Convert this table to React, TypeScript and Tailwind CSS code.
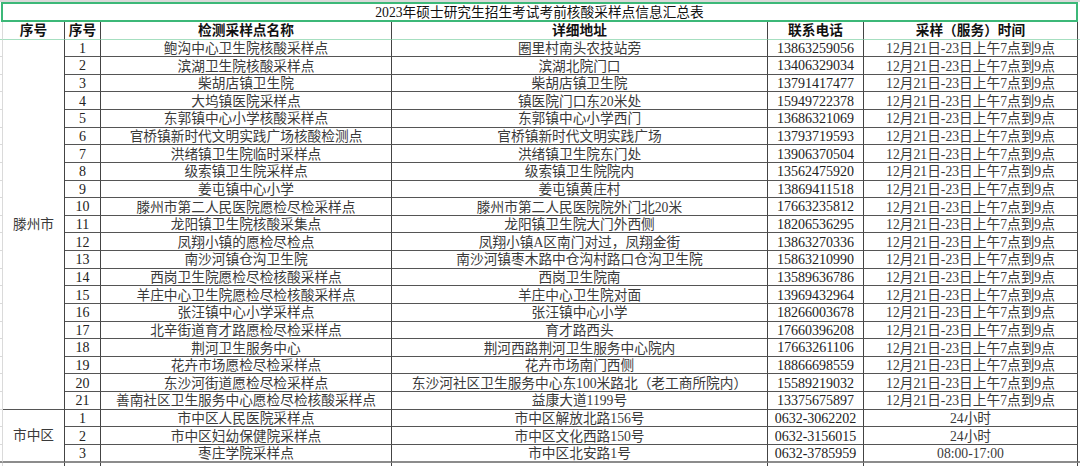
const T = '12月21日-23日上午7点到9点'

const tengzhou: [string, string, string][] = [
  ['鲍沟中心卫生院核酸采样点', '圈里村南头农技站旁', '13863259056'],
  ['滨湖卫生院核酸采样点', '滨湖北院门口', '13406329034'],
  ['柴胡店镇卫生院', '柴胡店镇卫生院', '13791417477'],
  ['大坞镇医院采样点', '镇医院门口东20米处', '15949722378'],
  ['东郭镇中心小学核酸采样点', '东郭镇中心小学西门', '13686321069'],
  ['官桥镇新时代文明实践广场核酸检测点', '官桥镇新时代文明实践广场', '13793719593'],
  ['洪绪镇卫生院临时采样点', '洪绪镇卫生院东门处', '13906370504'],
  ['级索镇卫生院采样点', '级索镇卫生院院内', '13562475920'],
  ['姜屯镇中心小学', '姜屯镇黄庄村', '13869411518'],
  ['滕州市第二人民医院愿检尽检采样点', '滕州市第二人民医院院外门北20米', '17663235812'],
  ['龙阳镇卫生院核酸采集点', '龙阳镇卫生院大门外西侧', '18206536295'],
  ['凤翔小镇的愿检尽检点', '凤翔小镇A区南门对过，凤翔金街', '13863270336'],
  ['南沙河镇仓沟卫生院', '南沙河镇枣木路中仓沟村路口仓沟卫生院', '15863210990'],
  ['西岗卫生院愿检尽检核酸采样点', '西岗卫生院南', '13589636786'],
  ['羊庄中心卫生院愿检尽检核酸采样点', '羊庄中心卫生院对面', '13969432964'],
  ['张汪镇中心小学采样点', '张汪镇中心小学', '18266003678'],
  ['北辛街道育才路愿检尽检采样点', '育才路西头', '17660396208'],
  ['荆河卫生服务中心', '荆河西路荆河卫生服务中心院内', '17663261106'],
  ['花卉市场愿检尽检采样点', '花卉市场南门西侧', '18866698559'],
  ['东沙河街道愿检尽检采样点', '东沙河社区卫生服务中心东100米路北（老工商所院内）', '15589219032'],
  ['善南社区卫生服务中心愿检尽检核酸采样点', '益康大道1199号', '13375675897'],
]

const shizhong: [string, string, string, string][] = [
  ['市中区人民医院采样点', '市中区解放北路156号', '0632-3062202', '24小时'],
  ['市中区妇幼保健院采样点', '市中区文化西路150号', '0632-3156015', '24小时'],
  ['枣庄学院采样点', '市中区北安路1号', '0632-3785959', '08:00-17:00'],
]

const rows = [
  ...tengzhou.map(([name, addr, tel], i) => ({ no: i + 1, name, addr, tel, time: T })),
  ...shizhong.map(([name, addr, tel, time], i) => ({ no: i + 1, name, addr, tel, time })),
]

export default function App() {
  return (
    <div className="w-[1080px] h-[466px] overflow-hidden bg-white text-[#3a3a3a] font-['Liberation_Serif','Noto_Sans_CJK_SC',serif] text-[13.7px] leading-none">
      <div className="h-[2px] bg-[#d9d9d9]" />
      {/* title row, selected */}
      <div className="ml-[1px] w-[1077px] h-[20px] border-2 border-[#3cb878] flex items-center justify-center pt-[1px] text-[#111]">
        2023年硕士研究生招生考试考前核酸采样点信息汇总表
      </div>

      <div className="grid grid-cols-[3px_62px_36px_291px_376px_96px_214px_2px] grid-rows-[17.5px_repeat(24,17.64px)_12px]">
        {/* header */}
        <div className="border-r border-b border-r-[#dadada] border-b-[#a6dfc0]" />
        {['序号', '序号', '检测采样点名称', '详细地址', '联系电话', '采样（服务）时间'].map((h, i) => (
          <div
            key={i}
            className="border-r border-b border-r-[#444] border-b-[#a6dfc0] flex items-center justify-center pt-[2px] font-bold text-[#111] whitespace-nowrap"
          >
            {h}
          </div>
        ))}
        <div className="border-b border-b-[#a6dfc0]" />

        {rows.map((r, i) => {
          const last = i === rows.length - 1
          const bb = last ? 'border-b-2 border-b-[#8c8c8c]' : 'border-b border-b-[#555]'
          const cell = `border-r border-r-[#444] ${bb} flex items-center justify-center pt-[2px] whitespace-nowrap`
          return [
            <div key={`s${i}`} className={`border-r border-b border-[#dadada] ${last ? 'border-b-2 border-b-[#8c8c8c]' : ''}`} />,
            i === 0 && (
              <div key="tz" className="row-span-21 border-r border-b border-r-[#444] border-b-[#555] flex items-center justify-center pt-[2px]">
                滕州市
              </div>
            ),
            i === 21 && (
              <div key="sz" className="row-span-3 border-r border-b-2 border-r-[#444] border-b-[#8c8c8c] flex items-center justify-center pt-[2px]">
                市中区
              </div>
            ),
            <div key={`n${i}`} className={`${cell} text-[14px] text-[#222]`}>{r.no}</div>,
            <div key={`a${i}`} className={cell}>{r.name}</div>,
            <div key={`b${i}`} className={cell}>{r.addr}</div>,
            <div key={`c${i}`} className={`${cell} text-[14px] text-[#222]`}>{r.tel}</div>,
            <div key={`d${i}`} className={cell}>{r.time}</div>,
            <div key={`e${i}`} className={last ? 'border-b-2 border-b-[#8c8c8c]' : ''} />,
          ]
        })}

        {/* next row, cut off */}
        <div className="border-r border-[#dadada]" />
        {[0, 1, 2, 3, 4, 5].map(k => (
          <div key={k} className="border-r border-[#444]" />
        ))}
        <div />
      </div>
    </div>
  )
}
